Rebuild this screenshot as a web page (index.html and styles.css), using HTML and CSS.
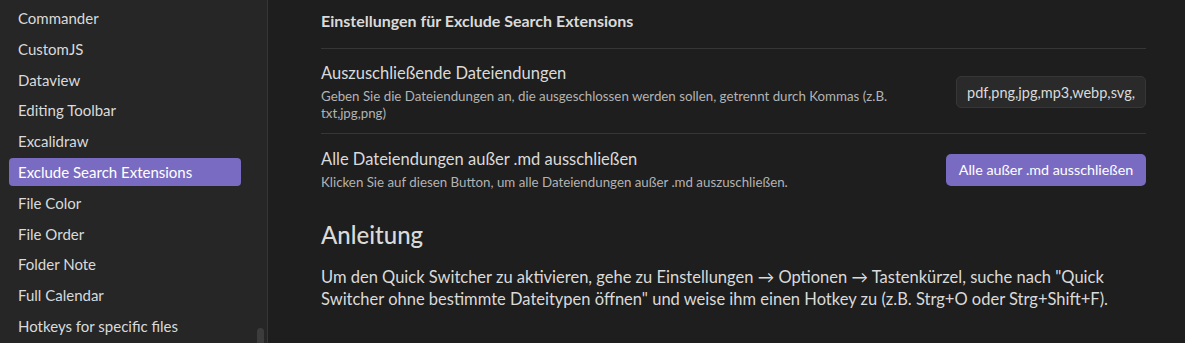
FILE: index.html
```html
<!DOCTYPE html>
<html lang="de">
<head>
    <meta charset="UTF-8">
    <meta name="viewport" content="width=device-width, initial-scale=1.0">
    <title>Exclude Search Extensions</title>
    <link rel="stylesheet" href="styles.css">
</head>
<body>
    <div class="app">
        <nav class="sidebar">
            <div class="nav-item">Commander</div>
            <div class="nav-item">CustomJS</div>
            <div class="nav-item">Dataview</div>
            <div class="nav-item">Editing Toolbar</div>
            <div class="nav-item">Excalidraw</div>
            <div class="nav-item active">Exclude Search Extensions</div>
            <div class="nav-item">File Color</div>
            <div class="nav-item">File Order</div>
            <div class="nav-item">Folder Note</div>
            <div class="nav-item">Full Calendar</div>
            <div class="nav-item">Hotkeys for specific files</div>
            <div class="scroll-thumb"></div>
        </nav>

        <main class="content">
            <h3 class="settings-title">Einstellungen für Exclude Search Extensions</h3>

            <div class="setting-item">
                <div class="setting-info">
                    <div class="setting-name">Auszuschließende Dateiendungen</div>
                    <div class="setting-desc">Geben Sie die Dateiendungen an, die ausgeschlossen werden sollen, getrennt durch Kommas (z.B. txt,jpg,png)</div>
                </div>
                <input type="text" class="setting-input" value="pdf,png,jpg,mp3,webp,svg,gif">
            </div>

            <div class="setting-item">
                <div class="setting-info">
                    <div class="setting-name">Alle Dateiendungen außer .md ausschließen</div>
                    <div class="setting-desc">Klicken Sie auf diesen Button, um alle Dateiendungen außer .md auszuschließen.</div>
                </div>
                <button class="mod-cta">Alle außer .md ausschließen</button>
            </div>

            <h2 class="guide-title">Anleitung</h2>
            <p class="guide-text">Um den Quick Switcher zu aktivieren, gehe zu Einstellungen → Optionen → Tastenkürzel, suche nach "Quick Switcher ohne bestimmte Dateitypen öffnen" und weise ihm einen Hotkey zu (z.B. Strg+O oder Strg+Shift+F).</p>
        </main>
    </div>
</body>
</html>
```

FILE: styles.css
```css
body {
    margin: 0;
    padding: 0;
    width: 1185px;
    height: 343px;
    overflow: hidden;
    background: #1e1e1e;
    color: #dadada;
    font-family: 'Lato', 'Noto Sans', sans-serif;
}
.app {
    display: flex;
    height: 343px;
}
.sidebar {
    position: relative;
    width: 268px;
    flex-shrink: 0;
    box-sizing: border-box;
    padding: 4px 26px 0 9px;
    background: #262626;
    border-right: 1px solid #363636;
    display: flex;
    flex-direction: column;
    gap: 2.8px;
}
.nav-item {
    height: 28px;
    line-height: 28px;
    padding: 0 9px;
    border-radius: 4px;
    font-size: 15px;
    color: #dadada;
    white-space: nowrap;
}
.nav-item.active {
    background: #7a6bc2;
    color: #ffffff;
}
.scroll-thumb {
    position: absolute;
    left: 257px;
    top: 328px;
    width: 7px;
    height: 30px;
    border-radius: 4px;
    background: #3c3c3c;
}
.content {
    flex: 1;
    padding: 10px 39px 0 53px;
}
.settings-title {
    margin: 0;
    padding-bottom: 16px;
    line-height: 22px;
    font-size: 16px;
    font-weight: 700;
    border-bottom: 1px solid #363636;
}
.setting-item {
    display: flex;
    align-items: center;
    padding: 13px 0 11px;
}
.setting-item + .setting-item {
    border-top: 1px solid #363636;
    padding-top: 14px;
}
.setting-info {
    flex: 1;
    margin-right: 16px;
}
.setting-name {
    font-size: 16.5px;
    line-height: 22px;
    margin-bottom: 4px;
}
.setting-desc {
    font-size: 13.3px;
    line-height: 17px;
    color: #b3b3b3;
}
.setting-input {
    width: 190px;
    height: 32px;
    box-sizing: border-box;
    padding: 0 10px;
    background: #2a2a2a;
    border: 1px solid #363636;
    border-radius: 5px;
    color: #dadada;
    font-family: inherit;
    font-size: 14.5px;
    outline: none;
}
.mod-cta {
    width: 200px;
    height: 32px;
    border: none;
    border-radius: 5px;
    background: #7a6bc2;
    color: #ffffff;
    font-family: inherit;
    font-size: 14.3px;
    cursor: pointer;
}
.guide-title {
    margin: 18px 0 0;
    font-size: 24px;
    line-height: 30px;
    font-weight: 500;
}
.guide-text {
    max-width: 812px;
    margin: 16px 0 0;
    font-size: 16.5px;
    line-height: 22px;
}
```
